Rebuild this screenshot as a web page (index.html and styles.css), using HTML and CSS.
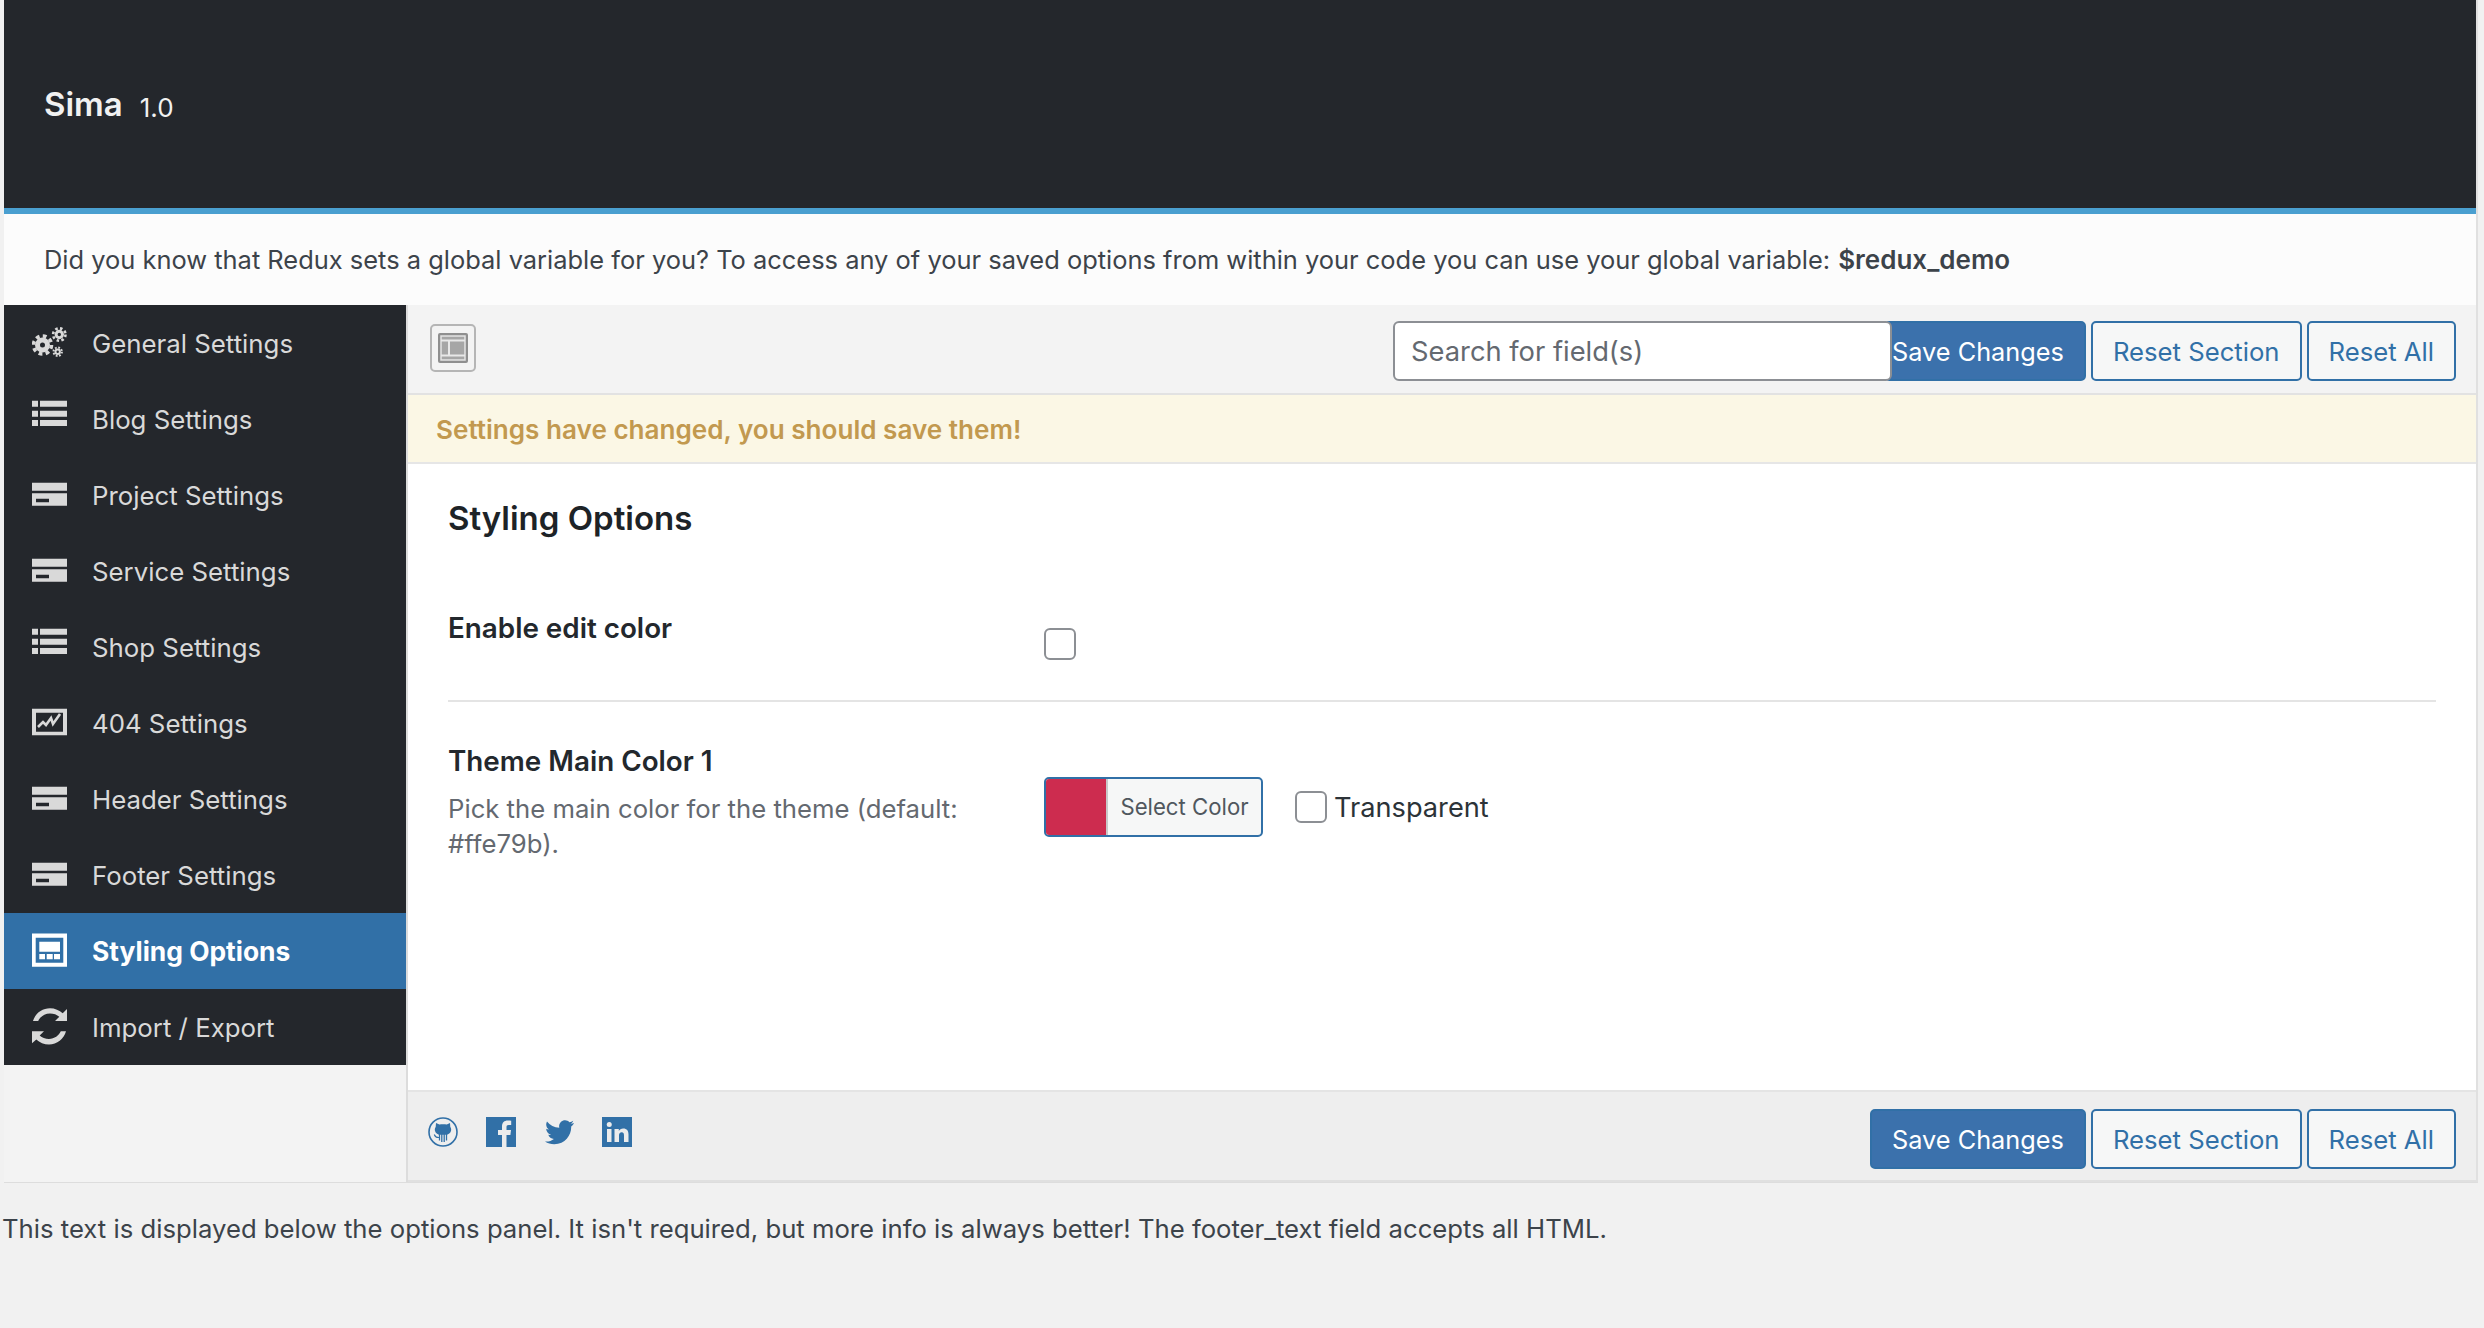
FILE: index.html
```html
<!DOCTYPE html>
<html lang="en">

<head>
    <meta charset="UTF-8">
    <title>Sima Options</title>
    <link rel="stylesheet" href="styles.css">
</head>

<body>
    <div class="panel">
        <header class="panel-header">
            <span class="panel-title">Sima</span>
            <span class="panel-version">1.0</span>
        </header>
        <div class="intro"><span>Did you know that Redux sets a global variable for you? To access any of your saved options from within your code you can use your global variable:</span> <strong>$redux_demo</strong></div>

        <div class="panel-body">
            <nav class="sidebar">
                <a class="nav-item"><svg class="nav-icon"><use href="#i-cogs"/></svg>General Settings</a>
                <a class="nav-item"><svg class="nav-icon"><use href="#i-list"/></svg>Blog Settings</a>
                <a class="nav-item"><svg class="nav-icon"><use href="#i-card"/></svg>Project Settings</a>
                <a class="nav-item"><svg class="nav-icon"><use href="#i-card"/></svg>Service Settings</a>
                <a class="nav-item"><svg class="nav-icon"><use href="#i-list"/></svg>Shop Settings</a>
                <a class="nav-item"><svg class="nav-icon"><use href="#i-chart"/></svg>404 Settings</a>
                <a class="nav-item"><svg class="nav-icon"><use href="#i-card"/></svg>Header Settings</a>
                <a class="nav-item"><svg class="nav-icon"><use href="#i-card"/></svg>Footer Settings</a>
                <a class="nav-item active"><svg class="nav-icon"><use href="#i-layout"/></svg>Styling Options</a>
                <a class="nav-item"><svg class="nav-icon"><use href="#i-refresh"/></svg>Import / Export</a>
            </nav>

            <main class="main">
                <div class="toolbar">
                    <button class="expand-btn" aria-label="Expand">
                        <svg viewBox="0 0 32 32" width="32" height="32">
                            <rect x="1" y="1" width="30" height="30" rx="2" fill="#8f8f8f"/>
                            <rect x="4" y="4" width="24" height="24" fill="#a6a6a6" stroke="#e4e4e4" stroke-width="1.5"/>
                            <path d="M4 8.5h24M4 23.5h24M12 8.5v15" stroke="#e8e8e8" stroke-width="2" fill="none"/>
                        </svg>
                    </button>
                    <div class="toolbar-actions">
                        <input class="search" type="text" placeholder="Search for field(s)">
                        <button class="btn btn-primary btn-joined">Save Changes</button>
                        <button class="btn">Reset Section</button>
                        <button class="btn">Reset All</button>
                    </div>
                </div>
                <div class="save-notice">Settings have changed, you should save them!</div>

                <section class="content">
                    <h2>Styling Options</h2>
                    <div class="field first">
                        <div class="field-label"><h4>Enable edit color</h4></div>
                        <div class="field-control"><span class="checkbox"></span></div>
                    </div>
                    <div class="field">
                        <div class="field-label">
                            <h4>Theme Main Color 1</h4>
                            <p>Pick the main color for the theme (default: #ffe79b).</p>
                        </div>
                        <div class="field-control color-row">
                            <button class="color-btn"><span class="swatch"></span><span class="color-text">Select Color</span></button>
                            <label class="transparent"><span class="checkbox"></span>Transparent</label>
                        </div>
                    </div>
                </section>

                <div class="footer-bar">
                    <div class="social">
                        <svg viewBox="0 0 30 30" width="30" height="30">
                            <circle cx="15" cy="15" r="14" fill="none" stroke="#3170a7" stroke-width="1.6"/>
                            <path d="M8 6l3.4 1.600c2.400-.6 5-.6 7.400 0L22 6l.3 4c.8 1.100 1 2.300.8 3.500-.4 2.500-2.600 4.200-5.500 4.300h-5.200c-2.900-.1-5.100-1.800-5.500-4.300-.2-1.200 0-2.400.8-3.500z" fill="#3170a7"/>
                            <path d="M11.500 17v6.500M13.800 17v8M16.200 17v8M18.500 17v6.500" stroke="#3170a7" stroke-width="1.300" fill="none"/>
                            <path d="M6.300 17.500c.7 2.300 2.500 3.300 5 3" stroke="#3170a7" stroke-width="1.100" fill="none"/>
                        </svg>
                        <svg viewBox="0 0 30 30" width="30" height="30">
                            <path d="M0 0h30v30H0z" fill="#3170a7"/>
                            <path d="M16 30V18h-4v-5h4V9.500C16 5.500 18.300 3.500 21.800 3.500c1.700 0 3 .1 3.400.2V8h-2.500c-1.800 0-2.200.9-2.200 2.200V13h4.500l-.6 5h-3.900v12z" fill="#ececec"/>
                        </svg>
                        <svg viewBox="0 0 30 30" width="30" height="30">
                            <path d="M30 6c-1 .5-2.200.8-3.400 1 1.200-.8 2.200-1.900 2.600-3.300-1.100.7-2.400 1.200-3.800 1.500C24.300 4 22.800 3.300 21.100 3.300c-3.300 0-6 2.700-6 6 0 .5.100.9.200 1.400C10.300 10.400 5.900 8 3 4.400c-.5.900-.8 1.900-.8 3 0 2.100 1.100 3.900 2.700 5-1 0-1.900-.3-2.700-.7v.1c0 2.900 2.100 5.300 4.800 5.900-.5.100-1 .2-1.600.2-.4 0-.8 0-1.100-.1.8 2.400 3 4.100 5.600 4.200-2.100 1.600-4.700 2.600-7.500 2.600-.5 0-1 0-1.400-.1 2.700 1.700 5.800 2.700 9.200 2.700 11 0 17-9.100 17-17v-.8c1.200-.8 2.200-1.900 2.800-3.400z" fill="#3170a7"/>
                        </svg>
                        <svg viewBox="0 0 30 30" width="30" height="30">
                            <path d="M0 0h30v30H0z" fill="#3170a7"/>
                            <path d="M5 12h4.500v13H5zM12.500 12h4.300v1.900c.8-1.300 2.300-2.300 4.400-2.300 3.700 0 5.300 2.300 5.300 6V25H22v-6.600c0-2-.7-3.100-2.300-3.100-1.800 0-2.700 1.300-2.700 3.100V25h-4.500z" fill="#ececec"/>
                            <circle cx="7.250" cy="7.500" r="2.500" fill="#ececec"/>
                        </svg>
                    </div>
                    <div class="footer-actions">
                        <button class="btn btn-primary">Save Changes</button>
                        <button class="btn">Reset Section</button>
                        <button class="btn">Reset All</button>
                    </div>
                </div>
            </main>
        </div>
    </div>

    <p class="below-text">This text is displayed below the options panel. It isn't required, but more info is always better! The footer_text field accepts all HTML.</p>

    <!-- sidebar icons, 35x50 box centred on the row -->
    <svg class="icon-defs" width="0" height="0">
        <defs>
            <symbol id="i-list" viewBox="0 0 35 50">
                <path d="M0 6.700h6v6H0zM8 6.700h27v6H8zM0 16.700h6v6H0zM8 16.700h27v6H8zM0 26h6v6H0zM8 26h27v6H8z"/>
            </symbol>
            <symbol id="i-card" viewBox="0 0 35 50">
                <path d="M0 12.700h35v8H0zM0 23.300h35v12.400H0zM4 28.700v3.600h13v-3.600z" fill-rule="evenodd"/>
            </symbol>
            <symbol id="i-chart" viewBox="0 0 35 50">
                <path d="M0 10.700h35v26.600H0zM4 14.700v19h27v-19z" fill-rule="evenodd"/>
                <path d="M6 29l5-5 3 3 5-7 2 6 7-10" fill="none" stroke="currentColor" stroke-width="2.600"/>
            </symbol>
            <symbol id="i-layout" viewBox="0 0 35 50">
                <path d="M0 7.400h35v33.300H0zM3.700 11.700v25h27.600v-25z" fill-rule="evenodd"/>
                <path d="M7.300 15.700H28v10H7.300zM7.300 28H13v5.300H7.300zM14.700 28h6v5.300h-6zM22 28h6v5.300h-6z"/>
            </symbol>
            <symbol id="i-refresh" viewBox="0 0 35 50">
                <path d="M35 7v12H23l4.300-4.200c-2.300-2.200-5.700-3.400-9.300-3.400-5.500 0-9.800 3.300-11.800 7.600H1C3 11.700 10 6.300 18 6.300c4.900 0 9.400 2 12.700 5z"/>
                <path d="M0 41.300V29.300h12l-4.300 4.200c2.300 2.200 5.700 3.400 9.300 3.400 5.500 0 9.800-3.300 11.800-7.600H34c-2 7.800-9 13.200-17 13.200-4.900 0-9.400-2-12.700-5z"/>
            </symbol>
            <symbol id="i-cogs" viewBox="0 0 35 50">
                <circle cx="10.500" cy="27" r="5" fill="none" stroke="currentColor" stroke-width="5"/>
                <circle cx="10.500" cy="27" r="9" fill="none" stroke="currentColor" stroke-width="3.600" stroke-dasharray="3.800 3.270"/>
                <circle cx="27.300" cy="16.500" r="3.200" fill="none" stroke="currentColor" stroke-width="3"/>
                <circle cx="27.300" cy="16.500" r="6.200" fill="none" stroke="currentColor" stroke-width="2.600" stroke-dasharray="2.500 2.370"/>
                <circle cx="25.700" cy="33.700" r="2.200" fill="none" stroke="currentColor" stroke-width="2"/>
                <circle cx="25.700" cy="33.700" r="4.200" fill="none" stroke="currentColor" stroke-width="2" stroke-dasharray="1.800 1.500"/>
            </symbol>
        </defs>
    </svg>
</body>

</html>
```

FILE: styles.css
```css
* {
    margin: 0;
    padding: 0;
    box-sizing: border-box;
}

body {
    background: #f1f1f1;
    color: #3c434a;
    font-family: Inter, "Noto Sans", sans-serif;
    font-size: 26px;
    width: 2484px;
    height: 1328px;
    overflow: hidden;
}

.panel {
    margin-left: 4px;
    width: 2474px;
    background: #fff;
    box-shadow: 0 1px 0 #ddd;
    border-right: 2px solid #e0e0e0;
}

.panel-header {
    height: 214px;
    background: #24272c;
    border-bottom: 6px solid #4a9fd0;
    padding-left: 40px;
    display: flex;
    align-items: center;
    gap: 17px;
    color: #f1f1f1;
}

.panel-title {
    font-size: 33px;
    font-weight: 600;
}

.panel-version {
    font-size: 26px;
    margin-top: 6px;
}

.intro {
    height: 91px;
    padding: 0 40px;
    display: flex;
    align-items: center;
    gap: 8px;
    background: #fcfcfc;
    font-size: 25.45px;
}

.intro strong {
    font-size: 26px;
    font-weight: 600;
}

.panel-body {
    display: flex;
    height: 877px;
    background: #f3f3f3;
}

.sidebar {
    width: 404px;
    flex-shrink: 0;
    border-right: 2px solid #dcdcdc;
    background: #f3f3f3;
}

.nav-item {
    height: 76px;
    display: flex;
    align-items: center;
    padding-left: 28px;
    gap: 25px;
    background: #24272c;
    color: #d9d9d9;
    font-size: 25.8px;
}

.nav-icon {
    width: 35px;
    height: 50px;
    fill: currentColor;
    flex-shrink: 0;
}

.nav-item.active {
    background: #3170a7;
    color: #fff;
    font-size: 26.4px;
    font-weight: 700;
}

.main {
    flex: 1;
    display: flex;
    flex-direction: column;
    min-width: 0;
}

.toolbar {
    height: 88px;
    padding: 16px 20px 0 22px;
    background: #f3f3f3;
    display: flex;
    justify-content: space-between;
    align-items: flex-start;
}

.expand-btn {
    width: 46px;
    height: 48px;
    margin-top: 3px;
    border: 2px solid #b5b5b5;
    border-radius: 5px;
    background: #f3f3f3;
    display: flex;
    align-items: center;
    justify-content: center;
}

.toolbar-actions,
.footer-actions {
    display: flex;
    gap: 5px;
}

.search {
    width: 499px;
    height: 60px;
    border: 2px solid #8c8f94;
    border-radius: 6px;
    padding: 0 16px;
    font-family: inherit;
    font-size: 27.3px;
    background: #fff;
    position: relative;
    z-index: 1;
}

.search::placeholder {
    color: #646970;
    opacity: 1;
}

.btn {
    height: 60px;
    padding: 0 20px;
    border: 2px solid #3170a7;
    border-radius: 5px;
    background: #f6f7f7;
    color: #3170a7;
    font-family: inherit;
    font-size: 25.7px;
}

.btn-primary {
    background: #3b71ac;
    color: #fff;
    font-size: 25.3px;
}

.btn-joined {
    margin-left: -13px;
    padding-left: 6px;
}

.save-notice {
    height: 71px;
    display: flex;
    align-items: center;
    padding: 2px 0 0 28px;
    background: #fbf7e5;
    border-top: 2px solid #e2e2e2;
    border-bottom: 2px solid #e6e6e6;
    color: #c2994f;
    font-size: 26.1px;
    font-weight: 600;
}

.content {
    flex: 1;
    background: #fff;
    padding: 0 40px;
}

.content h2 {
    font-size: 33px;
    font-weight: 600;
    color: #1d2327;
    padding-top: 31px;
    line-height: 46px;
}

.field {
    display: flex;
    padding-top: 40px;
}

.field.first {
    padding-top: 68px;
    height: 161px;
    border-bottom: 2px solid #e4e4e4;
}

.field-label {
    width: 596px;
    padding-right: 40px;
    flex-shrink: 0;
}

.field-label h4 {
    font-size: 27.8px;
    font-weight: 600;
    color: #23282d;
    line-height: 38px;
}

.field-label p {
    font-size: 25.7px;
    line-height: 35px;
    color: #646970;
    margin-top: 11px;
}

.field-control {
    padding-top: 19px;
}

.checkbox {
    display: block;
    width: 32px;
    height: 32px;
    border: 2px solid #8c8f94;
    border-radius: 6px;
    background: #fff;
    flex-shrink: 0;
}

.color-row {
    display: flex;
    align-items: center;
    gap: 32px;
    padding-top: 0;
    height: 60px;
    margin-top: 35px;
}

.color-btn {
    display: flex;
    width: 219px;
    height: 60px;
    border: 2px solid #3170a7;
    border-radius: 5px;
    overflow: hidden;
    background: #f6f7f7;
    font-family: inherit;
}

.swatch {
    width: 62px;
    height: 100%;
    background: #cd2c4f;
    border-right: 2px solid #c9c9c9;
}

.color-text {
    flex: 1;
    line-height: 56px;
    text-align: center;
    font-size: 22.2px;
    color: #50575e;
}

.transparent {
    display: flex;
    align-items: center;
    gap: 7px;
    font-size: 27.2px;
    color: #2c3338;
}

.footer-bar {
    height: 92px;
    background: #eee;
    border-top: 2px solid #e4e4e4;
    border-bottom: 2px solid #e0e0e0;
    padding: 17px 20px 0 20px;
    display: flex;
    justify-content: space-between;
    align-items: flex-start;
}

.social {
    display: flex;
    gap: 28px;
    padding-top: 8px;
}

.below-text {
    padding-top: 17px;
    line-height: 60px;
    font-size: 25.7px;
    margin-left: 2px;
}

.icon-defs {
    position: absolute;
}
```
